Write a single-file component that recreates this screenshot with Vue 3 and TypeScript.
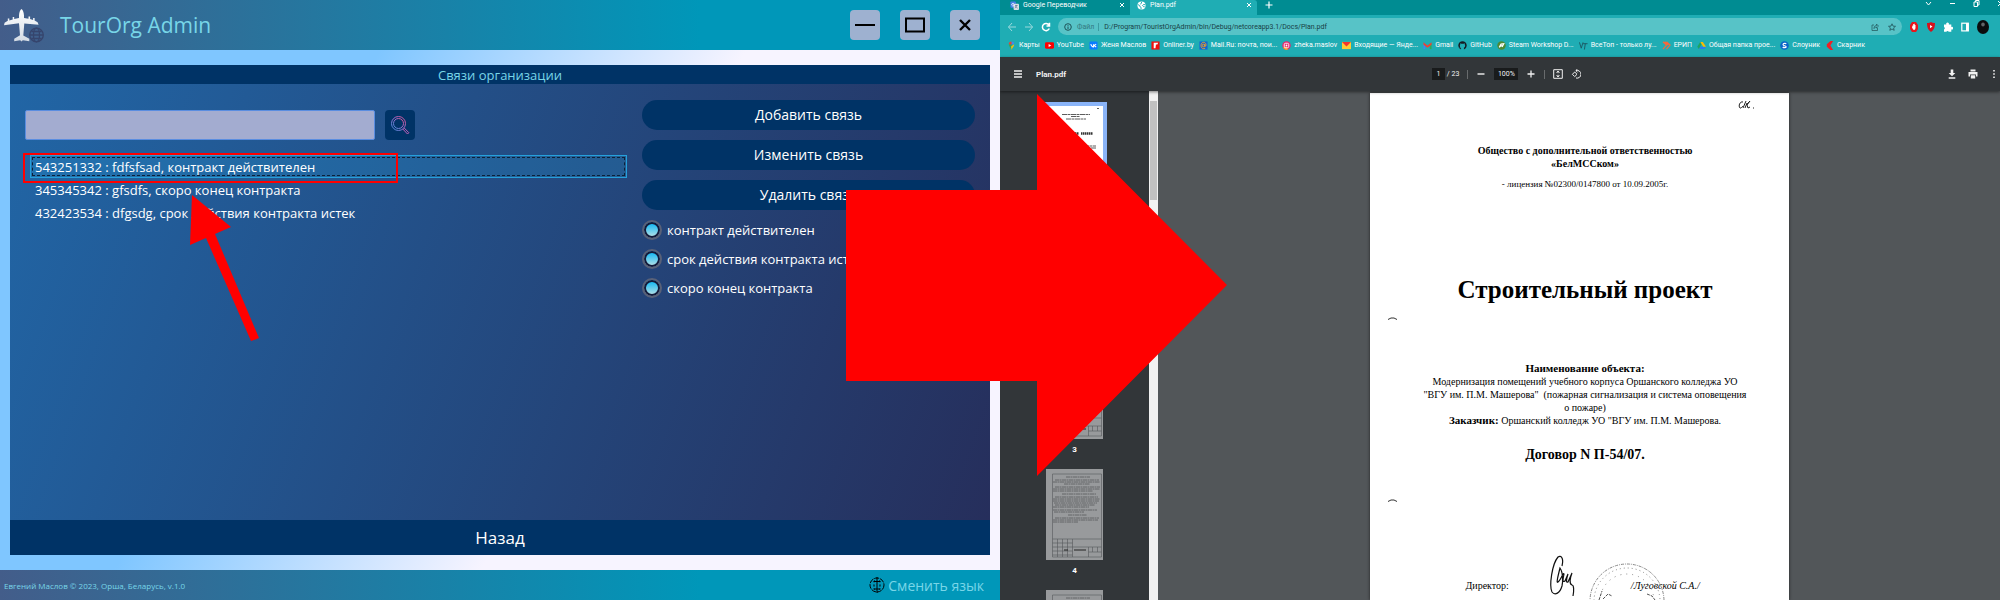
<script setup lang="ts">
import { ref } from 'vue'

interface Contract { id: string; name: string; state: string }
interface Bookmark { icon: string; label: string }

const query = ref('')
const contracts: Contract[] = [
  { id: '543251332', name: 'fdfsfsad', state: 'контракт действителен' },
  { id: '345345342', name: 'gfsdfs', state: 'скоро конец контракта' },
  { id: '432423534', name: 'dfgsdg', state: 'срок действия контракта истек' },
]
const selected = ref(0)
const actions = ['Добавить связь', 'Изменить связь', 'Удалить связь']
const filters = ['контракт действителен', 'срок действия контракта истек', 'скоро конец контракта']

const bookmarks: Bookmark[] = [
  { icon: 'maps', label: 'Карты' },
  { icon: 'youtube', label: 'YouTube' },
  { icon: 'vk', label: 'Женя Маслов' },
  { icon: 'onliner', label: 'Onliner.by' },
  { icon: 'mailru', label: 'Mail.Ru: почта, пои...' },
  { icon: 'instagram', label: 'zheka.maslov' },
  { icon: 'yandex', label: 'Входящие — Янде...' },
  { icon: 'gmail', label: 'Gmail' },
  { icon: 'github', label: 'GitHub' },
  { icon: 'steam', label: 'Steam Workshop D...' },
  { icon: 'vsetop', label: 'ВсеТоп - только лу...' },
  { icon: 'erip', label: 'ЕРИП' },
  { icon: 'drive', label: 'Общая папка прое...' },
  { icon: 'slounik', label: 'Слоуник' },
  { icon: 'skarnik', label: 'Скарник' },
]
const pages = [1, 2, 3, 4, 5]
const textRows = [
  [20, 8, 24], [9, 11, 44], [7, 13, 47], [18, 15, 26], [9, 18, 45], [7, 20, 47], [7, 22, 40], [16, 25, 34],
  [9, 28, 43], [7, 30, 47], [7, 32, 46], [8, 34, 43], [9, 36, 40], [7, 38, 36], [7, 41, 44], [8, 43, 30],
  [22, 46, 19], [9, 49, 44], [7, 51, 45], [7, 53, 25],
]
</script>

<template>
  <div class="page">
    <section class="admin">
      <header class="titlebar">
        <svg class="plane" viewBox="0 0 42 38" aria-hidden="true">
          <defs>
            <linearGradient id="metal" x1="0" y1="0" x2="0" y2="1">
              <stop offset="0" stop-color="#ffffff" /><stop offset="1" stop-color="#d3dbe4" />
            </linearGradient>
          </defs>
          <path fill="url(#metal)" d="M17.500 3c1.500 1 2.300 3.400 2.500 6.500V12l4.500.8V10.500h1.600v2.600l3 .9V12h1.500v2.600l3 1.600 1 2.600-14.300-1.400-1 12 6 3.300v2.500l-6.500-1-1.300 1.200-1.300-1.200-6 1v-2.500l5.800-3.500-1-12L0 19.300l.6-2.600 3.200-1.900V12.500h1.500v1.900l3.400-1v-2.500h1.500V13l4.800-.9V9.500C15.200 6.400 16 4 17.500 3z" />
          <g fill="none" stroke="#36456d" stroke-width="1.300">
            <circle cx="32.500" cy="29" r="6.800" /><ellipse cx="32.500" cy="29" rx="3" ry="6.800" />
            <path d="M26 29h13M27.500 25.500h10M27.500 32.500h10" />
          </g>
        </svg>
        <h1>TourOrg Admin</h1>
        <div class="window-buttons">
          <button type="button" aria-label="Свернуть">
            <svg viewBox="0 0 30 30"><path d="M5 15h20" stroke="#000" stroke-width="2" /></svg>
          </button>
          <button type="button" aria-label="Развернуть">
            <svg viewBox="0 0 30 30"><rect x="6" y="8.500" width="18" height="13" fill="none" stroke="#000" stroke-width="2" /></svg>
          </button>
          <button type="button" aria-label="Закрыть">
            <svg viewBox="0 0 30 30"><path d="M10 10l10 10M20 10L10 20" stroke="#000" stroke-width="2.400" /></svg>
          </button>
        </div>
      </header>

      <main class="workspace">
        <div class="panel">
          <h2>Связи организации</h2>
          <div class="columns">
            <div class="left">
              <form class="search" @submit.prevent>
                <input v-model="query" type="text" aria-label="Поиск" />
                <button type="submit" aria-label="Найти">
                  <svg viewBox="0 0 30 30">
                    <defs>
                      <linearGradient id="lens" x1="0" y1="1" x2="1" y2="0">
                        <stop offset="0" stop-color="#3f8fe0" /><stop offset=".55" stop-color="#a36bc8" /><stop offset="1" stop-color="#e0508c" />
                      </linearGradient>
                    </defs>
                    <g fill="none" stroke="url(#lens)">
                      <circle cx="13.500" cy="13.500" r="7" /><circle cx="13.500" cy="13.500" r="5" />
                      <path d="M17.800 19l4.700 5 1.300-1.300-4.800-4.900" stroke="#c060b8" />
                    </g>
                  </svg>
                </button>
              </form>
              <ul class="contracts">
                <li v-for="(c, i) in contracts" :key="c.id">
                  <button type="button" :class="{ selected: selected === i }" @click="selected = i">
                    {{ c.id }} : {{ c.name }}, {{ c.state }}
                  </button>
                </li>
              </ul>
              <svg class="frame-mark" viewBox="0 0 375 30" aria-hidden="true">
                <rect x="1" y="1" width="373" height="28" fill="none" stroke="#f00" stroke-width="2" />
              </svg>
              <svg class="small-arrow" viewBox="0 0 70 146" aria-hidden="true">
                <path fill="#f00" d="M2 0L41 32 25 39 69 143 61 146 16 43 0 50z" />
              </svg>
            </div>
            <div class="right">
              <button v-for="a in actions" :key="a" class="action" type="button">{{ a }}</button>
              <div class="filters">
                <label v-for="f in filters" :key="f"><input type="radio" name="state" :value="f" /><span>{{ f }}</span></label>
              </div>
            </div>
          </div>
          <button class="back" type="button">Назад</button>
        </div>
      </main>

      <footer class="statusbar">
        <small>Евгений Маслов © 2023, Орша, Беларусь, v.1.0</small>
        <button type="button">
          <svg viewBox="0 0 16 16" fill="none" stroke="#000" aria-hidden="true">
            <circle cx="8" cy="8" r="7" stroke-dasharray="5 1" /><path d="M8 0v16M4.500 4.500h7M4.500 12h7" />
            <path d="M5.500 3.500C4.800 6 4.800 10 5.500 12.500M10.500 3.500c.7 2.500.7 6.500 0 9" stroke-dasharray="2 2" />
          </svg>
          Сменить язык
        </button>
      </footer>
    </section>

    <section class="browser">
      <div class="tabs">
        <div class="tab">
          <svg class="ico" viewBox="0 0 10 10"><rect x=".5" y=".5" width="6" height="7" rx="1" fill="#4a7fe8" /><rect x="4" y="3" width="6" height="7" rx="1" fill="#d7dde4" /><path d="M5.500 5h3M7 4.500v1.500L5.500 8M6 6l2.500 2" stroke="#5b6f8c" stroke-width=".7" fill="none" /><path d="M4.500 3a1.500 1.500 0 1 0 .4 1.400H3.500" stroke="#fff" stroke-width=".8" fill="none" /></svg>
          <span>Google Переводчик</span>
          <button type="button" aria-label="Закрыть вкладку"><svg viewBox="0 0 6 6"><path d="M1 1l4 4M5 1L1 5" /></svg></button>
        </div>
        <div class="tab active">
          <svg class="ico" viewBox="0 0 10 10"><circle cx="5" cy="5" r="4.500" fill="#fff" /><path d="M1 4l2 1v1l1.500 1v2M5 1v1.500L3.500 3.500M9 4H7L6 5l1 1h1v1" stroke="#1fadb4" stroke-width="1.100" fill="none" /></svg>
          <span>Plan.pdf</span>
          <button type="button" aria-label="Закрыть вкладку"><svg viewBox="0 0 6 6"><path d="M1 1l4 4M5 1L1 5" /></svg></button>
        </div>
        <button class="new-tab" type="button" aria-label="Новая вкладка"><svg viewBox="0 0 8 8"><path d="M4 .5v7M.5 4h7" stroke-width="1.200" /></svg></button>
        <div class="win">
          <svg viewBox="0 0 7 7"><path d="M1 2l2.500 3L6 2" /></svg>
          <svg viewBox="0 0 7 7"><path d="M1 3.500h5" /></svg>
          <svg viewBox="0 0 7 7"><path d="M1 2h3.500v4.500H1zM2.500 2V.5H6V5H4.500" /></svg>
          <svg viewBox="0 0 7 7"><path d="M1 1l5 5M6 1L1 6" /></svg>
        </div>
      </div>

      <div class="address-row">
        <button class="faded" type="button" aria-label="Назад"><svg viewBox="0 0 10 10"><path d="M9 5H1.500M5 1L1.500 5 5 9" /></svg></button>
        <button class="faded" type="button" aria-label="Вперёд"><svg viewBox="0 0 10 10"><path d="M1 5h7.500M5 1l3.500 4L5 9" /></svg></button>
        <button type="button" aria-label="Обновить"><svg viewBox="0 0 10 10"><path d="M8 3A3.600 3.600 0 1 0 8.300 6.500M8.500 .8V4H5.500" stroke-width="1.500" /></svg></button>
        <div class="omnibox">
          <svg viewBox="0 0 8 8"><circle cx="4" cy="4" r="3.300" /><path d="M4 3.500v2.500M4 2v.8" /></svg>
          <label for="url">Файл</label>
          <input id="url" type="text" value="D:/Program/TouristOrgAdmin/bin/Debug/netcoreapp3.1/Docs/Plan.pdf" />
          <svg viewBox="0 0 8 8"><path d="M3 2H1v5.500h5.500V5M3 5.500C3 3.500 4 2.500 5.500 2.500V1L7.500 3.200 5.500 5V4C4.500 4 3.500 4.500 3 5.500z" stroke-width=".7" /></svg>
          <svg class="star" viewBox="0 0 8 8"><path d="M4 .8l1 2.300 2.500.2-1.900 1.600.6 2.400L4 6 1.800 7.300l.6-2.400L.5 3.300 3 3.100z" stroke-width=".8" /></svg>
        </div>
        <div class="extensions">
          <svg viewBox="0 0 10 10"><path fill="#e8161d" d="M3 0h4l2 3v4L7 10H3L1 7V3z" /><path fill="#fff" d="M3.500 3.500h.7V2h.8v-.2h.7V3h.8v3L6 7.800H4.300L3 5.500z" /></svg>
          <svg viewBox="0 0 10 10"><path fill="#d8101c" d="M1 1c2 0 3-.3 4-1 1 .7 2 1 4 1 0 4-.8 7-4 9C1.800 8 1 5 1 1z" /><path fill="#fff" d="M4 3l2.500 1.500L4 6.200z" /></svg>
          <svg viewBox="0 0 10 10"><path fill="#fff" d="M1 2.500h2.300a1.400 1.400 0 1 1 2.500 0H8.300V5a1.300 1.300 0 1 1 0 2.400V9.800H5.700a1.200 1.200 0 0 0-2.300 0H1V7.400a1.300 1.300 0 0 0 0-2.400z" /></svg>
          <svg viewBox="0 0 10 10"><rect x="1.800" y="1.200" width="6.500" height="7.700" fill="none" stroke="#fff" stroke-width="1.200" /><path fill="#fff" d="M6 1h2.500v8H6z" /></svg>
          <svg viewBox="0 0 12 14"><ellipse cx="6" cy="7" rx="6" ry="7" fill="#0b0d0e" /><ellipse cx="6" cy="4.500" rx="1.800" ry="2" fill="#606568" /></svg>
        </div>
      </div>

      <nav class="bookmarks">
        <a v-for="b in bookmarks" :key="b.label" href="#">
          <svg class="ico" viewBox="0 0 10 10" aria-hidden="true">
            <template v-if="b.icon === 'maps'"><path fill="#34a853" d="M5 10C4 7 2 6 2 3.500L5 3.500z" /><path fill="#4285f4" d="M5 .5a3 3 0 0 1 3 3H5z" /><path fill="#ea4335" d="M5 .5a3 3 0 0 0-3 3l3 .5z" /><path fill="#fbbc04" d="M8 3.500C8 6 6 7 5 10L4.500 6z" /></template>
            <template v-else-if="b.icon === 'youtube'"><rect y="1.500" width="10" height="7" rx="1.500" fill="#f00" /><path fill="#fff" d="M4 3.300L7 5 4 6.700z" /></template>
            <template v-else-if="b.icon === 'vk'"><rect x=".5" y=".5" width="9" height="9" rx="1.500" fill="#0a7cff" /><path fill="none" stroke="#fff" stroke-width="1.200" d="M2 3.500C2.500 5.500 3.500 6.500 5 6.500v-3M8 3.500L5.500 5 8 6.700" /></template>
            <template v-else-if="b.icon === 'onliner'"><rect x=".5" y=".5" width="9" height="9" fill="#f4100c" /><path fill="#fff" d="M3 2h5L7 4H5.500L5 8H3z" /></template>
            <template v-else-if="b.icon === 'mailru'"><rect x=".5" y=".5" width="9" height="9" fill="#1464d2" /><g fill="none" stroke="#f9a51a" stroke-width="1"><circle cx="5" cy="5" r="1.400" /><path d="M6.400 3.500V6c1.800.5 2.200-4.500-1.400-4.500S1.200 8.500 5 8.500l1.800-.4" /></g></template>
            <template v-else-if="b.icon === 'instagram'"><circle cx="5" cy="5" r="4.700" fill="#e6266e" /><path fill="#fb9b2d" d="M1 7.500A4.700 4.700 0 0 0 7 9.300L4 6z" /><rect x="2.500" y="2.500" width="5" height="5" rx="1.500" fill="none" stroke="#fff" /><circle cx="5" cy="5" r="1" fill="#fff" /></template>
            <template v-else-if="b.icon === 'yandex'"><rect y="1" width="10" height="8" fill="#ffcc35" /><path fill="#f5352d" d="M0 1h10L5 6z" /></template>
            <template v-else-if="b.icon === 'gmail'"><path fill="#4285f4" d="M.5 3h2v6h-2z" /><path fill="#34a853" d="M7.500 3h2v6h-2z" /><path fill="#ea4335" d="M.5 1.500L5 5l4.500-3.500v2.700L5 7.500.5 4.200z" /></template>
            <template v-else-if="b.icon === 'github'"><path fill="#161b22" d="M5 .3a4.700 4.700 0 0 0-1.600 9.100V8C2 8.200 2 7 1.500 6.800c.8 0 1 .9 1.900.7C2 7 1.700 5 2.500 4V2.500l1.300.6h2.400l1.300-.6V4c.8 1 .5 3-.9 3.500v1.900A4.700 4.700 0 0 0 5 .3z" /></template>
            <template v-else-if="b.icon === 'steam'"><circle cx="5" cy="5" r="4.700" fill="#4e8a35" /><path stroke="#fff" stroke-width="1.300" fill="none" d="M2.500 7l2-2 1.500 1 1.500-3-3 .5z" /></template>
            <template v-else-if="b.icon === 'vsetop'"><path stroke="#1c5560" fill="none" d="M.5 1.500L2.500 8 4.500 1.500M4.500 3H9.500M7 3L6 9.500" /></template>
            <template v-else-if="b.icon === 'erip'"><path fill="none" stroke="#f4683c" stroke-width="1.300" d="M1 .8l4 3.700-4 4.500M5 .8l4 3.700-4 4.500M3 .8l4 3.700" /></template>
            <template v-else-if="b.icon === 'drive'"><path fill="#2a7cf0" d="M2 9l1.500-2.700H10L8.500 9z" /><path fill="#fbbc04" d="M3.500 1h3L10 6.300H7z" /><path fill="#1da462" d="M3.500 1L5 3.500 2 9 .3 6.300z" /></template>
            <template v-else-if="b.icon === 'slounik'"><circle cx="5" cy="5" r="4.800" fill="#0b66c8" /><path fill="none" stroke="#fff" stroke-width="1.400" d="M7 3C4.500 2 3 3 3.500 4.300S7 5 6.800 6.500 4 7.500 3 6.800" /></template>
            <template v-else><path fill="#ee2026" d="M6 0h3L6 5l3 5H6L2 6.500V3.500z" /></template>
          </svg>
          <span>{{ b.label }}</span>
        </a>
      </nav>

      <div class="pdf-bar">
        <button class="menu" type="button" aria-label="Меню"><svg viewBox="0 0 8 8"><path d="M0 1h8M0 4h8M0 7h8" stroke-width="1.600" /></svg></button>
        <strong>Plan.pdf</strong>
        <div class="pdf-center">
          <div class="pager"><input class="num" type="text" value="1" aria-label="Страница" /><span>/ 23</span></div>
          <i class="sep"></i>
          <button type="button" aria-label="Уменьшить"><svg viewBox="0 0 10 10"><path d="M1.500 5h7" stroke-width="1.400" /></svg></button>
          <input class="zoom" type="text" value="100%" aria-label="Масштаб" />
          <button type="button" aria-label="Увеличить"><svg viewBox="0 0 10 10"><path d="M1.500 5h7M5 1.500v7" stroke-width="1.300" /></svg></button>
          <i class="sep"></i>
          <button type="button" aria-label="По размеру страницы"><svg viewBox="0 0 10 10"><path d="M.7.700h8.600v8.600H.7zM5 2.200v2M5 5.800v2M3.500 3.500L5 2.200l1.500 1.300M3.500 6.500L5 7.800l1.500-1.300" /></svg></button>
          <button type="button" aria-label="Повернуть"><svg viewBox="0 0 10 10"><path d="M3.700 3L6 5.300 3.700 7.600 1.400 5.300zM5 1.500a3.900 3.900 0 1 1 0 7.500M6.500 0L4.800 1.600l1.700 1.500" /></svg></button>
        </div>
        <div class="pdf-right">
          <button type="button" aria-label="Скачать"><svg viewBox="0 0 10 10"><path d="M3.700.500h2.600v3.500h2L5 7.300 1.700 4h2zM1.700 8.300h6.600v1.400H1.700z" fill="#f1f1f1" stroke="none" /></svg></button>
          <button type="button" aria-label="Печать"><svg viewBox="0 0 10 10"><path d="M2.500.500h5v2h-5zM.5 3h9v4.500H8v-2H2v2H.5zM2.800 6.200h4.400v3.300H2.800z" fill="#f1f1f1" stroke="none" /></svg></button>
          <button type="button" aria-label="Ещё"><svg viewBox="0 0 10 10"><path d="M4.200 1h1.600v1.600H4.200zM4.200 4.200h1.600v1.600H4.200zM4.200 7.400h1.600V9H4.200z" fill="#f1f1f1" stroke="none" /></svg></button>
        </div>
      </div>

      <div class="viewer">
        <aside class="thumbs">
          <ol>
            <li v-for="p in pages" :key="p" :class="{ current: p === 1 }">
              <svg viewBox="0 0 57 91" aria-hidden="true">
                <rect width="57" height="91" :fill="p === 1 ? '#fff' : '#989a9c'" />
                <g v-if="p === 1" stroke="#333" fill="none">
                  <path d="M16 8.500h28M25 10.500h9M20 13h20M38 40h12M36 42h14M51 2.500h2" stroke-width=".8" stroke-dasharray="5 .5 3 .5" />
                  <path d="M13 27.500h20M35 27.500h12" stroke-width="2.500" stroke-dasharray="1.500 .5" />
                </g>
                <g v-else stroke="#55585b" fill="none">
                  <path d="M6.500 5h49v83h-49zM6.500 70h49M6.500 74h20M6.500 78h49M6.500 82h20M6.500 86h20M26.500 70v18M11.500 70v18M16.500 70v18M21.500 70v18M42.500 78v10M42.500 83h13M46.500 78v5M51.500 78v5" stroke-width=".6" />
                  <path v-for="(r, k) in textRows" :key="k" :d="`M${r[0]} ${r[1]}h${r[2]}`" stroke-width=".8" stroke-dasharray="4 .5 2 .5" />
                  <path d="M18 81h4M28 81h12" stroke="#222" />
                </g>
              </svg>
              <span>{{ p }}</span>
            </li>
          </ol>
          <div class="scrollbar"><i></i></div>
        </aside>
        <article class="sheet">
          <svg class="initials" viewBox="0 0 17 10" aria-hidden="true"><path d="M5 2C2 1 0 6 2 8c1 .5 2-1 3-2M8 1L5 8M9 3L7 8M8 5l4-4-3 4 1 3 2-1M15 8h1" fill="none" stroke="#222" /></svg>
          <p class="org">Общество с дополнительной ответственностью<br />«БелМССком»</p>
          <p class="licence">- лицензия №02300/0147800 от 10.09.2005г.</p>
          <h3>Строительный проект</h3>
          <svg class="tick" viewBox="0 0 9 3" aria-hidden="true"><path d="M0 2.500L3 1h3l3 1.500" fill="none" stroke="#333" /></svg>
          <div class="details">
            <h4>Наименование объекта:</h4>
            <p>Модернизация помещений учебного корпуса Оршанского колледжа УО<br />"ВГУ им. П.М. Машерова"&nbsp; (пожарная сигнализация и система оповещения<br />о пожаре)</p>
            <p><b>Заказчик:</b> Оршанский колледж УО "ВГУ им. П.М. Машерова.</p>
          </div>
          <h5>Договор N П-54/07.</h5>
          <svg class="tick" viewBox="0 0 9 3" aria-hidden="true"><path d="M0 2.500L3 1h3l3 1.500" fill="none" stroke="#333" /></svg>
          <div class="signature">
            <span>Директор:</span>
            <svg class="sign" viewBox="0 0 120 50" aria-hidden="true">
              <path d="M13 14C15 6 12 3 9 5 3 12 0 34 3 40c3 4 8 1 10-6 1-4 1-14-2-18-2 8-4 16-2 14 3-2 5-10 6-8-1 5-2 9 1 7l3-7c-2 6-2 9 0 8l4-9c-2 5-3 11 0 12 2 0 2 6 1 11" fill="none" stroke="#111" stroke-width="1.200" />
              <g fill="none" stroke="#888"><circle cx="78" cy="49" r="37" stroke-dasharray="3 1 1 1" /><circle cx="78" cy="49" r="33" stroke-dasharray="1 3" /><circle cx="78" cy="49" r="27" stroke-dasharray="1 5" /></g>
              <path d="M54 47l5-5 4 2M98 42l5 2 3 4M50 48l3-9" stroke="#555" fill="none" stroke-dasharray="3 1" />
            </svg>
            <em>/Луговской С.А./</em>
          </div>
        </article>
      </div>
    </section>

    <svg class="big-arrow" viewBox="0 0 381 382" aria-hidden="true">
      <path fill="#f00" d="M0 96h191V0l190 191-190 191V287H0z" />
    </svg>
  </div>
</template>

<style>
body { margin: 0; }
</style>

<style scoped>
* { box-sizing: border-box; }
h1, h2, h3, h4, h5, p, ul, ol { margin: 0; padding: 0; font-weight: 400; }
ul, ol { list-style: none; }
button { border: 0; padding: 0; background: none; color: inherit; font: inherit; cursor: pointer; }
input { margin: 0; border: 0; padding: 0; font: inherit; color: inherit; }
svg { display: block; flex: none; }

.page { position: relative; display: grid; grid-template: minmax(0, 1fr) / 1fr 1fr; height: 100vh; overflow: hidden; }
.admin { display: flex; flex-direction: column; min-width: 0; font-family: "Open Sans", "Noto Sans", sans-serif; color: #fff; }

.titlebar { display: flex; align-items: center; height: 50px; padding: 0 20px 0 4px; background: linear-gradient(90deg, #435d8a 0, #0097b9 70%); }
.plane { width: 42px; height: 38px; }
h1 { margin-left: 14px; font-size: 21px; line-height: 28px; color: #78d6e8; }
.window-buttons { display: flex; gap: 20px; margin-left: auto; }
.window-buttons button { width: 30px; height: 30px; border-radius: 4px; background: #9eb1d0; }

.workspace { flex: 1; display: flex; min-height: 0; padding: 15px 10px; background: linear-gradient(117deg, #7fc6ff 30%, #f7f4ff 59%); }
.panel { flex: 1; display: flex; flex-direction: column; min-width: 0; background: linear-gradient(110deg, #2166a6, #262e5b); }
h2 { height: 19px; background: #003366; color: #78d6e8; font-size: 13px; line-height: 20px; text-align: center; }
.columns { flex: 1; display: grid; grid-template-columns: 602fr 333fr; gap: 15px; min-height: 0; padding: 16px 15px; }
.left { position: relative; padding-top: 10px; }
.search { display: flex; gap: 10px; }
.search input { width: 350px; height: 30px; border: 1px solid #5a8de0; border-radius: 2px; padding: 0 6px; background: #a3acd0; font-size: 13px; color: #111; }
.search button { width: 30px; height: 30px; border-radius: 4px; background: #003366; }
.contracts { margin: 15px 0 0 5px; }
.contracts button { display: block; width: 100%; height: 23px; border: 1px solid transparent; padding: 0 4px; font-size: 13px; line-height: 22px; text-align: left; }
.contracts .selected { border-color: #26a0da; background: rgba(38, 160, 218, .24); outline: 1px dashed #0c2237; outline-offset: -3px; }
.frame-mark { position: absolute; left: -2px; top: 53px; width: 375px; height: 30px; }
.small-arrow { position: absolute; left: 165px; top: 95px; width: 70px; height: 146px; }
.right { display: flex; flex-direction: column; gap: 10px; }
.action { height: 30px; border-radius: 15px; background: #003366; font-size: 14px; line-height: 30px; }
.filters { display: flex; flex-direction: column; gap: 9px; }
.filters label { display: flex; align-items: center; gap: 5px; height: 20px; font-size: 13px; white-space: nowrap; }
.filters input { appearance: none; width: 20px; height: 20px; border: 2px solid #596178; border-radius: 50%; background: linear-gradient(#00b4f5, #c4e3e4) padding-box; box-shadow: inset 0 0 0 2px #141a3a; }
.back { flex: none; height: 35px; background: #003366; font-size: 17px; line-height: 35px; }

.statusbar { display: flex; align-items: center; justify-content: space-between; height: 30px; padding: 0 16px 0 4px; background: linear-gradient(90deg, #435d8a 0, #0097b9 70%); color: #78d6e8; }
.statusbar small { font-size: 8px; }
.statusbar button { display: flex; align-items: center; gap: 3px; font-size: 14px; }
.statusbar svg { width: 16px; height: 16px; }

.browser { display: flex; flex-direction: column; min-width: 0; min-height: 0; overflow: hidden; font-family: Roboto, sans-serif; color: #fff; background: #525659; }
.browser button svg, .win svg { fill: none; stroke: currentColor; }
.tabs { display: flex; height: 15px; background: #008c92; font-size: 7px; line-height: 11px; }
.tab { display: flex; width: 130px; padding: 0 5px 0 10px; gap: 4px; }
.tab.active { width: 127px; border-radius: 0 3px 0 0; padding-left: 7px; background: #1fadb4; }
.ico { width: 9px; height: 9px; }
.tab .ico { margin-top: 1px; }
.tab button { width: 6px; height: 6px; margin: 2px 0 0 auto; }
.new-tab { width: 8px; height: 8px; margin: 1px 0 0 8px; }
.win { display: flex; gap: 17px; margin: 0 -4px 0 auto; }
.win svg { width: 7px; height: 7px; }

.address-row { display: flex; align-items: center; gap: 7px; height: 23px; padding: 0 11px 0 7px; background: #1fadb4; }
.address-row > button { width: 10px; height: 10px; }
.faded { opacity: .55; }
.omnibox { flex: 1; display: flex; align-items: center; gap: 5px; height: 17px; border-radius: 9px; padding: 0 6px; background: #57c3c7; color: #1e464b; font-size: 7px; }
.omnibox svg { width: 8px; height: 8px; fill: none; stroke: #1f5358; }
.omnibox .star { margin-left: 4px; }
.omnibox label { border-right: 1px solid #3a9ca2; padding-right: 4px; color: #337a80; }
.omnibox input { flex: 1; min-width: 0; background: none; color: #173f45; }
.extensions { display: flex; align-items: center; gap: 7px; }
.extensions svg { width: 10px; height: 10px; }
.extensions svg:last-child { width: 12px; height: 14px; }

.bookmarks { display: flex; gap: 5px; height: 19px; padding: 0 7px; background: #1fadb4; font-size: 7px; line-height: 15px; }
.bookmarks a { display: flex; gap: 3px; color: inherit; text-decoration: none; white-space: nowrap; }
.bookmarks .ico { margin-top: 3px; }

.pdf-bar { display: grid; grid-template-columns: auto auto 1fr auto; align-items: center; height: 34px; padding: 0 1px 0 14px; background: #323639; font-size: 7px; color: #f1f1f1; box-shadow: 0 1px 3px rgba(0, 0, 0, .5); z-index: 1; }
.menu { width: 8px; height: 8px; }
.pdf-bar strong { margin-left: 14px; font-size: 8px; }
.pdf-center { display: flex; align-items: center; justify-content: center; gap: 8px; }
.pdf-center input { height: 12px; background: #191b1c; text-align: center; }
.pager { display: flex; align-items: center; gap: 2px; }
.num { width: 13px; }
.zoom { width: 24px; }
.sep { width: 1px; height: 9px; background: #686b6d; }
.pdf-bar button:not(.menu) { width: 10px; height: 10px; }
.pdf-right { display: flex; gap: 11px; }

.viewer { flex: 1; display: flex; min-height: 0; }
.thumbs { display: flex; width: 158px; overflow: hidden; background: #323639; }
.thumbs ol { flex: 1; padding-top: 15px; }
.thumbs li { display: flex; flex-direction: column; align-items: center; height: 121px; font-size: 8px; line-height: 22px; font-weight: 700; }
.thumbs li svg { width: 57px; height: 91px; }
.thumbs .current svg { outline: 4px solid #8ab4f8; }
.scrollbar { width: 9px; padding: 10px 1px; background: #f1f1f1; }
.scrollbar i { display: block; height: 99px; background: #c1c1c1; }
.sheet { width: 50%; max-width: 419px; margin: 2px auto 0; padding: 7px 16px 0 28px; background: #fff; color: #000; font-family: "Liberation Serif", serif; text-align: center; box-shadow: 0 0 3px #222; white-space: nowrap; }
.initials { width: 17px; height: 10px; margin: 0 18px 0 auto; }
.org { margin-top: 34px; font-size: 10px; line-height: 13px; font-weight: 700; }
.licence { margin-top: 8px; font-size: 9px; line-height: 13px; }
h3 { margin-top: 82px; font-size: 25px; line-height: 34px; font-weight: 700; }
.tick { width: 9px; height: 3px; margin: 10px 0 0 -10px; }
.details { margin-top: 41px; font-size: 10px; line-height: 13px; }
h4 { font-size: 11px; line-height: 14px; font-weight: 700; }
.details b { font-size: 11px; }
h5 { margin-top: 18px; font-size: 14px; line-height: 20px; font-weight: 700; }
h5 + .tick { margin-top: 34px; }
.signature { display: flex; margin-top: 50px; padding-left: 68px; font-size: 10px; line-height: 20px; text-align: left; }
.signature span, .signature em { margin-top: 24px; }
.sign { width: 120px; height: 50px; margin-left: 40px; }
.signature em { margin-left: -38px; }

.big-arrow { position: absolute; left: 846px; top: 94px; width: 381px; height: 382px; z-index: 2; }
</style>
